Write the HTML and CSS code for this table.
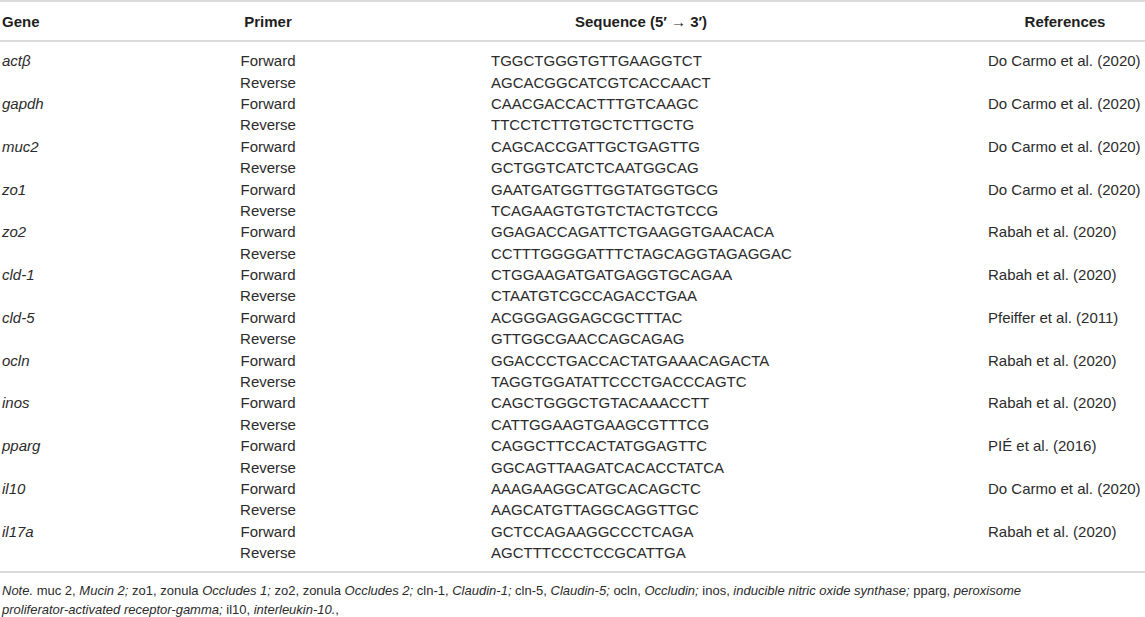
FILE: index.html
```html
<!DOCTYPE html>
<html>
<head>
<meta charset="utf-8">
<link rel="stylesheet" href="styles.css">
</head>
<body>
<div class="wrap">
<table class="primers">
  <colgroup>
    <col class="c-gene"><col class="c-primer"><col class="c-seq"><col class="c-ref">
  </colgroup>
  <thead>
    <tr>
      <th class="gene">Gene</th>
      <th>Primer</th>
      <th>Sequence (5′ → 3′)</th>
      <th>References</th>
    </tr>
  </thead>
  <tbody>
    <tr class="first"><td class="gene"><i>actβ</i></td><td class="primer">Forward</td><td class="seq">TGGCTGGGTGTTGAAGGTCT</td><td class="ref">Do Carmo et al. (2020)</td></tr>
    <tr><td class="gene"></td><td class="primer">Reverse</td><td class="seq">AGCACGGCATCGTCACCAACT</td><td class="ref"></td></tr>
    <tr><td class="gene"><i>gapdh</i></td><td class="primer">Forward</td><td class="seq">CAACGACCACTTTGTCAAGC</td><td class="ref">Do Carmo et al. (2020)</td></tr>
    <tr><td class="gene"></td><td class="primer">Reverse</td><td class="seq">TTCCTCTTGTGCTCTTGCTG</td><td class="ref"></td></tr>
    <tr><td class="gene"><i>muc2</i></td><td class="primer">Forward</td><td class="seq">CAGCACCGATTGCTGAGTTG</td><td class="ref">Do Carmo et al. (2020)</td></tr>
    <tr><td class="gene"></td><td class="primer">Reverse</td><td class="seq">GCTGGTCATCTCAATGGCAG</td><td class="ref"></td></tr>
    <tr><td class="gene"><i>zo1</i></td><td class="primer">Forward</td><td class="seq">GAATGATGGTTGGTATGGTGCG</td><td class="ref">Do Carmo et al. (2020)</td></tr>
    <tr><td class="gene"></td><td class="primer">Reverse</td><td class="seq">TCAGAAGTGTGTCTACTGTCCG</td><td class="ref"></td></tr>
    <tr><td class="gene"><i>zo2</i></td><td class="primer">Forward</td><td class="seq">GGAGACCAGATTCTGAAGGTGAACACA</td><td class="ref">Rabah et al. (2020)</td></tr>
    <tr><td class="gene"></td><td class="primer">Reverse</td><td class="seq">CCTTTGGGGATTTCTAGCAGGTAGAGGAC</td><td class="ref"></td></tr>
    <tr><td class="gene"><i>cld-1</i></td><td class="primer">Forward</td><td class="seq">CTGGAAGATGATGAGGTGCAGAA</td><td class="ref">Rabah et al. (2020)</td></tr>
    <tr><td class="gene"></td><td class="primer">Reverse</td><td class="seq">CTAATGTCGCCAGACCTGAA</td><td class="ref"></td></tr>
    <tr><td class="gene"><i>cld-5</i></td><td class="primer">Forward</td><td class="seq">ACGGGAGGAGCGCTTTAC</td><td class="ref">Pfeiffer et al. (2011)</td></tr>
    <tr><td class="gene"></td><td class="primer">Reverse</td><td class="seq">GTTGGCGAACCAGCAGAG</td><td class="ref"></td></tr>
    <tr><td class="gene"><i>ocln</i></td><td class="primer">Forward</td><td class="seq">GGACCCTGACCACTATGAAACAGACTA</td><td class="ref">Rabah et al. (2020)</td></tr>
    <tr><td class="gene"></td><td class="primer">Reverse</td><td class="seq">TAGGTGGATATTCCCTGACCCAGTC</td><td class="ref"></td></tr>
    <tr><td class="gene"><i>inos</i></td><td class="primer">Forward</td><td class="seq">CAGCTGGGCTGTACAAACCTT</td><td class="ref">Rabah et al. (2020)</td></tr>
    <tr><td class="gene"></td><td class="primer">Reverse</td><td class="seq">CATTGGAAGTGAAGCGTTTCG</td><td class="ref"></td></tr>
    <tr><td class="gene"><i>pparg</i></td><td class="primer">Forward</td><td class="seq">CAGGCTTCCACTATGGAGTTC</td><td class="ref">PIÉ et al. (2016)</td></tr>
    <tr><td class="gene"></td><td class="primer">Reverse</td><td class="seq">GGCAGTTAAGATCACACCTATCA</td><td class="ref"></td></tr>
    <tr><td class="gene"><i>il10</i></td><td class="primer">Forward</td><td class="seq">AAAGAAGGCATGCACAGCTC</td><td class="ref">Do Carmo et al. (2020)</td></tr>
    <tr><td class="gene"></td><td class="primer">Reverse</td><td class="seq">AAGCATGTTAGGCAGGTTGC</td><td class="ref"></td></tr>
    <tr><td class="gene"><i>il17a</i></td><td class="primer">Forward</td><td class="seq">GCTCCAGAAGGCCCTCAGA</td><td class="ref">Rabah et al. (2020)</td></tr>
    <tr class="last"><td class="gene"></td><td class="primer">Reverse</td><td class="seq">AGCTTTCCCTCCGCATTGA</td><td class="ref"></td></tr>
  </tbody>
</table>
<p class="note"><i>Note.</i> muc 2, <i>Mucin 2;</i> zo1, zonula <i>Occludes 1;</i> zo2, zonula <i>Occludes 2;</i> cln-1, <i>Claudin-1;</i> cln-5, <i>Claudin-5;</i> ocln, <i>Occludin;</i> inos, <i>inducible nitric oxide synthase;</i> pparg, <i>peroxisome proliferator-activated receptor-gamma;</i> il10, <i>interleukin-10.</i>,</p>
</div>
</body>
</html>
```

FILE: styles.css
```css
html, body {
  margin: 0;
  padding: 0;
  background: #ffffff;
  overflow: hidden;
}

body {
  font-family: "Liberation Sans", Arial, sans-serif;
  color: #2b2b2b;
}

.wrap {
  width: 1184px;
}

.primers {
  border-collapse: collapse;
  table-layout: fixed;
  width: 1184px;
  font-size: 15px;
  border-top: 2px solid #dadada;
  border-bottom: 2px solid #dadada;
}

.c-gene { width: 200px; }
.c-primer { width: 136px; }
.c-seq { width: 610px; }
.c-ref { width: 238px; }

.primers thead th {
  height: 38px;
  padding: 0;
  font-weight: bold;
  color: #1e1e1e;
  text-align: center;
  vertical-align: middle;
  border-bottom: 2px solid #dadada;
}

.primers thead th.gene {
  text-align: left;
  padding-left: 2px;
}

.primers tbody td {
  height: 21.4px;
  padding: 0;
  line-height: 17px;
  vertical-align: middle;
  white-space: nowrap;
}

.primers tbody tr.first td { padding-top: 8px; }
.primers tbody tr.last td { padding-bottom: 8px; }

.gene { padding-left: 2px; text-align: left; }
.primers tbody td.gene { padding-left: 2px; }
.primer { text-align: center; }
.seq { text-align: left; }
.primers tbody td.seq { padding-left: 155px; }
.primers tbody td.ref { padding-left: 42px; }

.note {
  margin: 8px 0 0 0;
  padding-left: 2px;
  width: 1045px;
  font-size: 13px;
  line-height: 19px;
  color: #2b2b2b;
}
```
